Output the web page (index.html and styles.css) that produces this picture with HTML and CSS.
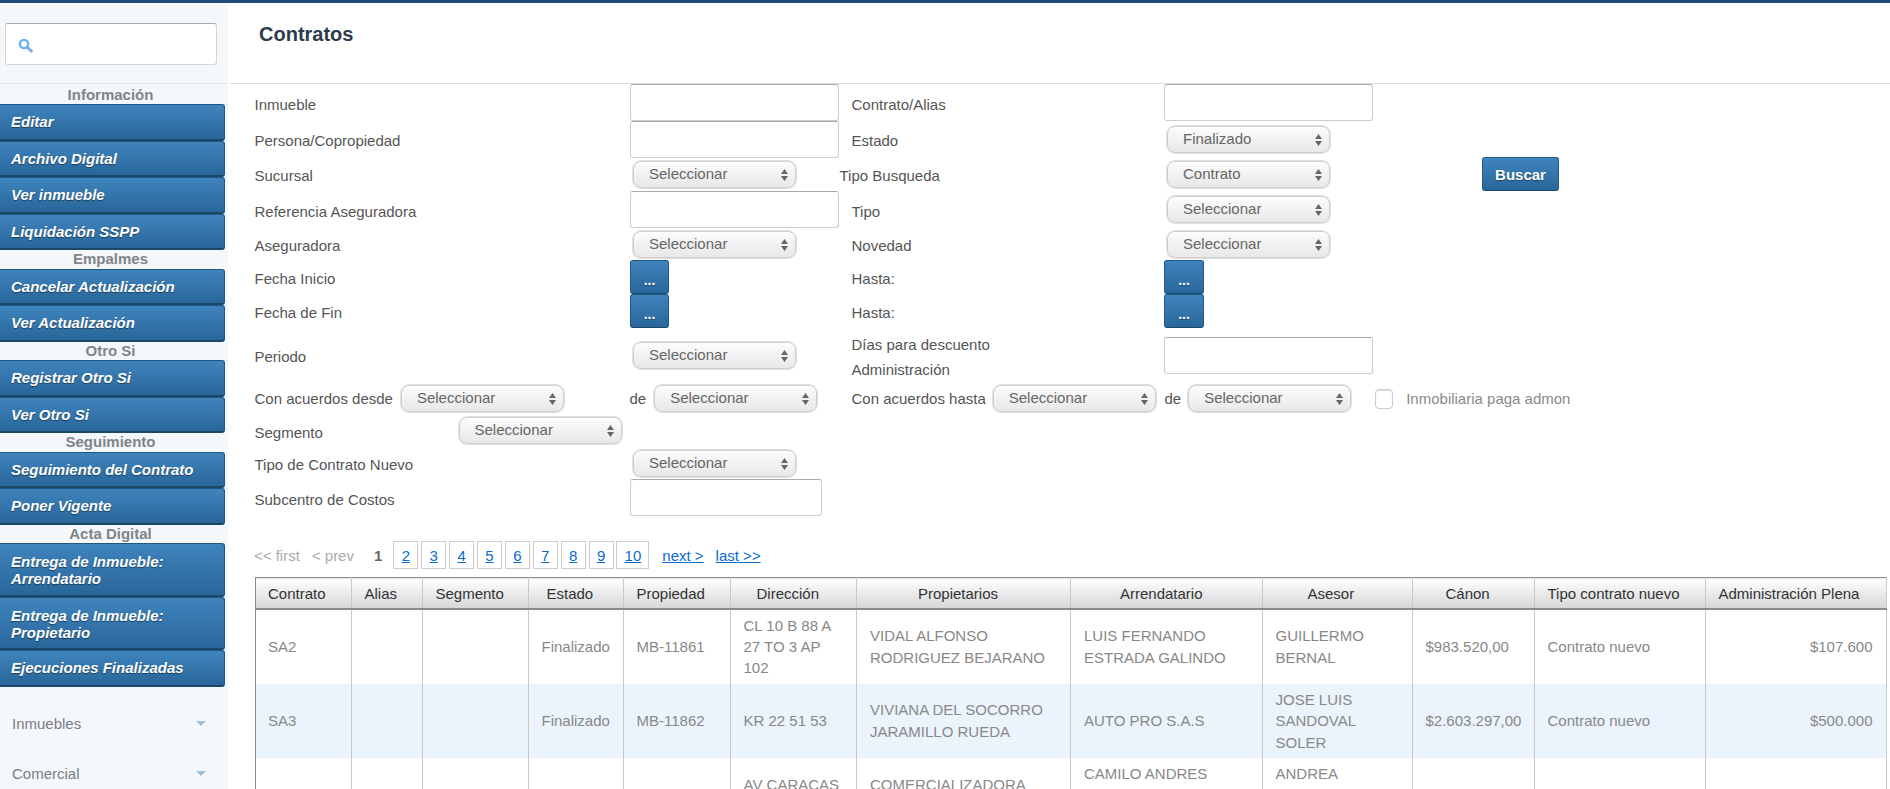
FILE: index.html
```html
<!DOCTYPE html>
<html lang="es">
<head>
<meta charset="utf-8">
<title>Contratos</title>
<link rel="stylesheet" href="styles.css">
</head>
<body>
<div class="topbar"></div>
<div class="app">
  <aside class="sidebar">
    <div class="search-area">
      <div class="search-box">
        <svg class="search-icon" width="15" height="15" viewBox="0 0 14 14"><circle cx="5.6" cy="5.6" r="3.9" fill="none" stroke="#6fb0ee" stroke-width="2.2"/><path d="M8.6 8.6 L12.6 12.4" stroke="#6fb0ee" stroke-width="2.6" stroke-linecap="round"/></svg>
        <input class="search-input" type="text">
      </div>
    </div>
    <div class="side-title">Información</div>
    <a class="side-btn">Editar</a>
    <a class="side-btn">Archivo Digital</a>
    <a class="side-btn">Ver inmueble</a>
    <a class="side-btn">Liquidación SSPP</a>
    <div class="side-title">Empalmes</div>
    <a class="side-btn">Cancelar Actualización</a>
    <a class="side-btn">Ver Actualización</a>
    <div class="side-title">Otro Si</div>
    <a class="side-btn">Registrar Otro Si</a>
    <a class="side-btn">Ver Otro Si</a>
    <div class="side-title">Seguimiento</div>
    <a class="side-btn">Seguimiento del Contrato</a>
    <a class="side-btn">Poner Vigente</a>
    <div class="side-title">Acta Digital</div>
    <a class="side-btn tall">Entrega de Inmueble: Arrendatario</a>
    <a class="side-btn tall">Entrega de Inmueble: Propietario</a>
    <a class="side-btn">Ejecuciones Finalizadas</a>
    <nav class="side-nav">
      <div class="side-nav-item"><span>Inmuebles</span><i class="caret"></i></div>
      <div class="side-nav-item"><span>Comercial</span><i class="caret"></i></div>
    </nav>
  </aside>
  <main class="main">
    <header class="page-head"><h1 class="page-title">Contratos</h1></header>
    <form class="filters">
      <label class="lbl">Inmueble</label>
      <input class="txt" type="text">
      <label class="lbl lbl2">Contrato/Alias</label>
      <input class="txt" type="text">
      <span></span>

      <label class="lbl">Persona/Copropiedad</label>
      <input class="txt" type="text">
      <label class="lbl lbl2">Estado</label>
      <div class="sel sel-r"><select><option>Finalizado</option></select><svg width="7" height="14" viewBox="0 0 7 14"><path d="M3.5 1 L7 6 H0Z M3.5 13 L7 8 H0Z" fill="#666"/></svg></div>
      <span></span>

      <label class="lbl">Sucursal</label>
      <div class="sel sel-l"><select><option>Seleccionar</option></select><svg width="7" height="14" viewBox="0 0 7 14"><path d="M3.5 1 L7 6 H0Z M3.5 13 L7 8 H0Z" fill="#666"/></svg></div>
      <label class="lbl">Tipo Busqueda</label>
      <div class="sel sel-r"><select><option>Contrato</option></select><svg width="7" height="14" viewBox="0 0 7 14"><path d="M3.5 1 L7 6 H0Z M3.5 13 L7 8 H0Z" fill="#666"/></svg></div>
      <button class="btn search-btn" type="button">Buscar</button>

      <label class="lbl">Referencia Aseguradora</label>
      <input class="txt" type="text">
      <label class="lbl lbl2">Tipo</label>
      <div class="sel sel-r"><select><option>Seleccionar</option></select><svg width="7" height="14" viewBox="0 0 7 14"><path d="M3.5 1 L7 6 H0Z M3.5 13 L7 8 H0Z" fill="#666"/></svg></div>
      <span></span>

      <label class="lbl">Aseguradora</label>
      <div class="sel sel-l"><select><option>Seleccionar</option></select><svg width="7" height="14" viewBox="0 0 7 14"><path d="M3.5 1 L7 6 H0Z M3.5 13 L7 8 H0Z" fill="#666"/></svg></div>
      <label class="lbl lbl2">Novedad</label>
      <div class="sel sel-r"><select><option>Seleccionar</option></select><svg width="7" height="14" viewBox="0 0 7 14"><path d="M3.5 1 L7 6 H0Z M3.5 13 L7 8 H0Z" fill="#666"/></svg></div>
      <span></span>

      <label class="lbl">Fecha Inicio</label>
      <button class="btn dots dots-l" type="button">...</button>
      <label class="lbl lbl2">Hasta:</label>
      <button class="btn dots" type="button">...</button>
      <span></span>

      <label class="lbl">Fecha de Fin</label>
      <button class="btn dots dots-l" type="button">...</button>
      <label class="lbl lbl2">Hasta:</label>
      <button class="btn dots" type="button">...</button>
      <span></span>

      <label class="lbl">Periodo</label>
      <div class="sel sel-l"><select><option>Seleccionar</option></select><svg width="7" height="14" viewBox="0 0 7 14"><path d="M3.5 1 L7 6 H0Z M3.5 13 L7 8 H0Z" fill="#666"/></svg></div>
      <label class="lbl lbl2 lbl-wrap">Días para descuento<br>Administración</label>
      <input class="txt" type="text">
      <span></span>

      <div class="inline inline-a"><label class="lbl-in">Con acuerdos desde</label><div class="sel"><select><option>Seleccionar</option></select><svg width="7" height="14" viewBox="0 0 7 14"><path d="M3.5 1 L7 6 H0Z M3.5 13 L7 8 H0Z" fill="#666"/></svg></div></div>
      <div class="inline inline-b"><label class="lbl-in">de</label><div class="sel"><select><option>Seleccionar</option></select><svg width="7" height="14" viewBox="0 0 7 14"><path d="M3.5 1 L7 6 H0Z M3.5 13 L7 8 H0Z" fill="#666"/></svg></div></div>
      <div class="inline inline-c"><label class="lbl-in">Con acuerdos hasta</label><div class="sel"><select><option>Seleccionar</option></select><svg width="7" height="14" viewBox="0 0 7 14"><path d="M3.5 1 L7 6 H0Z M3.5 13 L7 8 H0Z" fill="#666"/></svg></div></div>
      <div class="inline inline-d"><label class="lbl-in">de</label><div class="sel"><select><option>Seleccionar</option></select><svg width="7" height="14" viewBox="0 0 7 14"><path d="M3.5 1 L7 6 H0Z M3.5 13 L7 8 H0Z" fill="#666"/></svg></div><span class="check"></span><label class="lbl-in muted">Inmobiliaria paga admon</label></div>

      <div class="inline inline-e"><label class="lbl-in seg">Segmento</label><div class="sel"><select><option>Seleccionar</option></select><svg width="7" height="14" viewBox="0 0 7 14"><path d="M3.5 1 L7 6 H0Z M3.5 13 L7 8 H0Z" fill="#666"/></svg></div></div>
      <span class="rest"></span>

      <label class="lbl">Tipo de Contrato Nuevo</label>
      <div class="sel sel-l"><select><option>Seleccionar</option></select><svg width="7" height="14" viewBox="0 0 7 14"><path d="M3.5 1 L7 6 H0Z M3.5 13 L7 8 H0Z" fill="#666"/></svg></div>
      <span class="rest3"></span>

      <label class="lbl">Subcentro de Costos</label>
      <input class="txt txt-short" type="text">
      <span class="rest3"></span>
    </form>

    <div class="pager">
      <span class="pg-off">&lt;&lt; first</span>
      <span class="pg-off">&lt; prev</span>
      <b class="pg-cur">1</b>
      <a class="pg-box">2</a><a class="pg-box">3</a><a class="pg-box">4</a><a class="pg-box">5</a><a class="pg-box">6</a><a class="pg-box">7</a><a class="pg-box">8</a><a class="pg-box">9</a><a class="pg-box wide">10</a>
      <a class="pg-link next">next &gt;</a>
      <a class="pg-link">last &gt;&gt;</a>
    </div>

    <table class="grid">
      <colgroup>
        <col class="c1"><col class="c2"><col class="c3"><col class="c4"><col class="c5"><col class="c6"><col class="c7"><col class="c8"><col class="c9"><col class="c10"><col class="c11"><col class="c12">
      </colgroup>
      <thead>
        <tr><th>Contrato</th><th>Alias</th><th>Segmento</th><th>Estado</th><th>Propiedad</th><th>Dirección</th><th>Propietarios</th><th>Arrendatario</th><th>Asesor</th><th>Cánon</th><th>Tipo contrato nuevo</th><th>Administración Plena</th></tr>
      </thead>
      <tbody>
        <tr><td>SA2</td><td></td><td></td><td>Finalizado</td><td>MB-11861</td><td>CL 10 B 88 A 27 TO 3 AP 102</td><td>VIDAL ALFONSO RODRIGUEZ BEJARANO</td><td>LUIS FERNANDO ESTRADA GALINDO</td><td>GUILLERMO BERNAL</td><td>$983.520,00</td><td>Contrato nuevo</td><td class="num">$107.600</td></tr>
        <tr class="alt"><td>SA3</td><td></td><td></td><td>Finalizado</td><td>MB-11862</td><td>KR 22 51 53</td><td>VIVIANA DEL SOCORRO JARAMILLO RUEDA</td><td>AUTO PRO S.A.S</td><td>JOSE LUIS SANDOVAL SOLER</td><td>$2.603.297,00</td><td>Contrato nuevo</td><td class="num">$500.000</td></tr>
        <tr><td></td><td></td><td></td><td></td><td></td><td>AV CARACAS 38 57</td><td>COMERCIALIZADORA LOS ANDES</td><td>CAMILO ANDRES HERNANDEZ RODRIGUEZ</td><td>ANDREA MARCELA RODRIGUEZ</td><td>$1.250.000,00</td><td></td><td class="num">$125.000</td></tr>
      </tbody>
    </table>
  </main>
</div>
</body>
</html>
```
FILE: styles.css
```css
* { box-sizing: border-box; }
html, body { margin: 0; padding: 0; height: 789px; overflow: hidden; background: #fff; }
body { font: 15px/1.42857 "Liberation Sans", Arial, sans-serif; color: #555; }

.topbar { height: 3px; background: #1d4a78; }
.app { display: flex; height: 786px; overflow: hidden; }

/* Sidebar */
.sidebar { width: 228px; flex: none; background: #f5f8fb; }
.search-area { height: 81px; margin-bottom: 1.5px; padding: 20px 0 0 5px; border-bottom: 1px solid #e4e6e8; }
.search-box { position: relative; width: 212px; height: 42px; }
.search-input { width: 100%; height: 100%; border: 1px solid #d6d6d6; border-top-color: #aaa; border-radius: 3px; background: #fff; display: block; }
.search-icon { position: absolute; left: 13px; top: 15px; }
.side-title { height: 18.5px; line-height: 18px; text-align: center; font-weight: bold; color: #7f8489; width: 221px; }
.side-btn {
  display: block; width: 225px; height: 36.5px; padding: 0 10px 0 11px;
  line-height: 34px; font-weight: bold; font-style: italic; color: #fff;
  text-shadow: 0 1px 1px rgba(0,0,0,.45);
  background: linear-gradient(#3f84bd, #29669a);
  border: 1px solid #1f5785; border-left: 0; border-bottom: 2px solid #1b4768;
  border-radius: 0 3px 3px 0;
}
.side-btn.tall { height: 53.5px; line-height: 17.3px; padding-top: 9px; }
.side-nav { margin-top: 12px; }
.side-nav-item { height: 50px; display: flex; align-items: center; justify-content: space-between; padding: 0 22px 0 12px; color: #7a7c88; }
.caret { width: 0; height: 0; border-left: 5px solid transparent; border-right: 5px solid transparent; border-top: 5px solid #a6bdd6; }

/* Main */
.main { width: 1660px; margin-left: 2px; flex: none; }
.page-head { height: 81px; border-bottom: 1px solid #dcdcdc; padding: 17px 0 0 29px; }
.page-title { margin: 0; font-size: 20px; line-height: 28px; font-weight: bold; color: #2e3b4e; }

.filters {
  display: grid;
  margin-left: 25px;
  grid-template-columns: 375px 210px 324px 318px 1fr;
  grid-template-rows: 37px 36px 34px 37px 32px 34px 34px 54px 32px 33px 32px 37px;
  align-items: center;
  justify-items: start;
}
.lbl { padding-top: 4px; margin-left: -0.5px; color: #555; white-space: nowrap; }
.lbl2 { padding-left: 12px; }
.lbl-wrap { line-height: 25px; }
.txt { width: 209px; height: 37px; border: 1px solid #ccc; border-top-color: #aaa; border-radius: 3px; background: #fff; display: block; }
.txt-short { width: 192px; }
.sel { position: relative; width: 163px; height: 27px; flex: none; }
.sel-l { margin-left: 3px; }
.sel-r { margin-left: 3px; }
.sel select {
  appearance: none; -webkit-appearance: none; display: block; width: 100%; height: 100%;
  padding: 0 20px 2px 15px; font: 15px "Liberation Sans", Arial, sans-serif; color: #666;
  background: linear-gradient(#fcfcfc, #e8e8e8); border: 1px solid #cfcfcf; border-radius: 8px;
  box-shadow: 0 0 0 1px #e0e0e0, inset 0 1px 0 #fff;
}
.sel svg { position: absolute; right: 8px; top: 7px; pointer-events: none; }
.btn {
  color: #fff; font-family: "Liberation Sans", Arial, sans-serif; font-weight: bold; padding: 0;
  text-shadow: 0 1px 1px rgba(0,0,0,.4);
  background: linear-gradient(#3f84bd, #29669a);
  border: 1px solid #1f5785; border-bottom-color: #1b4768; border-radius: 3px;
}
.dots { width: 40px; height: 34px; font-size: 14px; padding-top: 5px; }
.dots-l { width: 39px; }
.search-btn { width: 77px; height: 34px; font-size: 15px; }

.inline { display: flex; align-items: center; margin-left: -0.5px; }
.lbl-in { white-space: nowrap; color: #555; }
.inline-a { gap: 8px; padding-top: 1px; }
.inline-b { gap: 8px; padding-top: 1px; }
.inline-c { gap: 7px; padding: 1px 0 0 12px; }
.inline-d { gap: 7px; padding: 1px 0 0 1px; grid-column: 4 / 6; }
.check { width: 18px; height: 20px; margin-left: 17px; border: 1px solid #ccc; border-radius: 4px; background: #fff; box-shadow: inset 0 1px 1px rgba(0,0,0,.12); }
.muted { color: #8a8a8a; margin-left: 6px; }
.inline-e { grid-column: 1; }
.seg { width: 204px; padding-top: 4px; }
.rest { grid-column: 2 / 6; }
.rest3 { grid-column: 3 / 6; }

/* Pager */
.pager { display: flex; align-items: flex-start; height: 28px; line-height: 29px; margin: 25px 0 0 24px; }
.pg-off { color: #aaa; margin-right: 12px; }
.pg-cur { color: #666; margin: 0 11px 0 8px; }
.pg-box { width: 25px; height: 28px; margin-right: 2.9px; border: 1px solid #ccc; line-height: 27px; text-align: center; color: #0a6ad0; text-decoration: underline; }
.pg-box.wide { width: 33px; }
.pg-link { color: #0a6ad0; text-decoration: underline; margin-right: 12px; }
.pg-link.next { margin-left: 10px; }

/* Table */
.grid { margin: 8px 0 0 25px; width: 1630px; table-layout: fixed; border-collapse: collapse; border-top: 1px solid #8a8a8a; border-left: 1px solid #8a8a8a; }
.c1 { width: 95.5px; } .c2 { width: 71px; } .c3 { width: 106px; } .c4 { width: 95px; } .c5 { width: 107px; } .c6 { width: 126.5px; }
.c7 { width: 214px; } .c8 { width: 191.5px; } .c9 { width: 150px; } .c10 { width: 122px; } .c11 { width: 171px; } .c12 { width: 181px; }
.grid th { height: 31px; padding: 1px 0 0 13px; text-align: left; font-weight: normal; color: #333; background: linear-gradient(#fff, #d6d6d8); border-right: 1px solid #c8c8c8; border-bottom: 2px solid #8a8a8a; white-space: nowrap; }
.grid th:nth-child(1) { padding-left: 12px; }
.grid th:nth-child(4) { padding-left: 18px; }
.grid th:nth-child(6) { padding-left: 26px; }
.grid th:nth-child(7) { padding-left: 61px; }
.grid th:nth-child(8) { padding-left: 49px; }
.grid th:nth-child(9) { padding-left: 45px; }
.grid th:nth-child(10) { padding-left: 33px; }
.grid td { padding: 5px 13px; color: #888; border-right: 1px solid #c8c8c8; vertical-align: middle; height: 74px; }
.grid td:first-child { padding-left: 12px; }
.grid tr.alt td { background: #ebf4fd; }
.grid td.num { text-align: right; }
```
